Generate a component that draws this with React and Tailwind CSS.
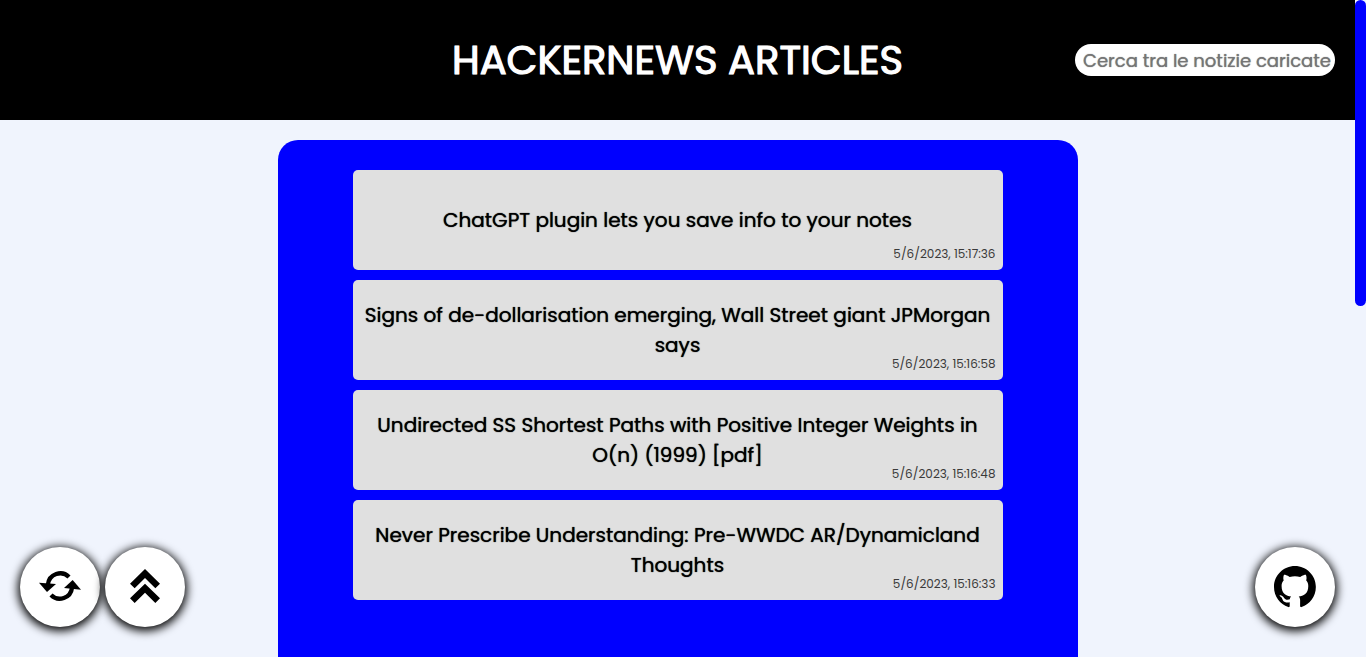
const articles = [
  { title: "ChatGPT plugin lets you save info to your notes", date: "5/6/2023, 15:17:36" },
  { title: "Signs of de-dollarisation emerging, Wall Street giant JPMorgan says", date: "5/6/2023, 15:16:58" },
  { title: "Undirected SS Shortest Paths with Positive Integer Weights in O(n) (1999) [pdf]", date: "5/6/2023, 15:16:48" },
  { title: "Never Prescribe Understanding: Pre-WWDC AR/Dynamicland Thoughts", date: "5/6/2023, 15:16:33" },
];

const round =
  "flex size-20 items-center justify-center rounded-full bg-white text-black shadow-[0_2px_10px_2px_#000]";

function Header() {
  return (
    <header className="grid min-h-[120px] grid-cols-[1fr_auto_1fr] items-center bg-black px-5">
      <h1 className="col-start-2 text-[40px] leading-[60px] font-normal text-white [-webkit-text-stroke:1px_white] [text-shadow:0_0_1px_#fff]">
        HACKERNEWS ARTICLES
      </h1>
      <input
        type="text"
        aria-label="Cerca tra le notizie caricate"
        placeholder="Cerca tra le notizie caricate"
        className="h-8 w-[260px] justify-self-end rounded-full bg-white pr-1 pl-2 text-[18px] font-normal text-black outline-none placeholder:text-[#757575] placeholder:[text-shadow:0_0_1px_#757575]"
      />
    </header>
  );
}

function Article({ title, date }) {
  return (
    <li>
      <a
        href="#"
        className="relative flex min-h-[100px] items-center justify-center rounded-[5px] bg-[#e0e0e0] px-2 py-5 text-center"
      >
        <h2 className="text-[20px] leading-[30px] font-normal text-black [text-shadow:0_0_1px_#000]">{title}</h2>
        <time className="absolute right-[7px] bottom-2 text-[12px] leading-4 font-normal text-[#3a3a3a]">{date}</time>
      </a>
    </li>
  );
}

export default function App() {
  return (
    <div className="flex h-screen bg-[#f0f4fd] font-['Poppins','Inter',sans-serif]">
      <div className="min-w-0 flex-1 overflow-y-auto [scrollbar-width:none]">
        <Header />
        <main className="mx-auto mt-5 min-h-[1270px] max-w-[800px] rounded-[20px] bg-[#0000ff] px-[75px] py-[30px]">
          <ul className="flex flex-col gap-[10px]">
            {articles.map((a) => (
              <Article key={a.date} {...a} />
            ))}
          </ul>
        </main>
      </div>

      <div className="w-[11px] shrink-0" aria-hidden="true">
        <div className="h-[46.6%] rounded-full bg-[#0000ff]" />
      </div>

      <div className="fixed bottom-[30px] left-5 flex gap-[5px]">
        <button type="button" aria-label="Aggiorna" className={round}>
          <svg viewBox="117 108 126 126" className="size-[42px]" fill="currentColor">
            <path d="M144 163 A37 37 0 0 1 207 141" fill="none" stroke="currentColor" strokeWidth="13" />
            <path d="M216 173 A37 37 0 0 1 153 195" fill="none" stroke="currentColor" strokeWidth="13" />
            <path d="M117 158 L168 162 L141 186 Z" />
            <path d="M243 179 L192 174 L218 150 Z" />
          </svg>
        </button>
        <button type="button" aria-label="Torna su" className={round}>
          <svg viewBox="372 108 126 126" className="size-[42px]" fill="currentColor">
            <path d="M435 117 L480 161 L466 175 L435 144 L404 175 L390 161 Z" />
            <path d="M435 161 L480 205 L466 219 L435 188 L404 219 L390 205 Z" />
          </svg>
        </button>
      </div>
      <a href="https://github.com" aria-label="GitHub" className={`${round} fixed right-[31px] bottom-[30px]`}>
        <svg viewBox="0 2 98 98" className="size-[42px]" fill="currentColor">
          <path
            fillRule="evenodd"
            clipRule="evenodd"
            d="M48.854 0C21.839 0 0 22 0 49.217c0 21.756 13.993 40.172 33.405 46.69 2.427.49 3.316-1.059 3.316-2.362 0-1.141-.08-5.052-.08-9.127-13.59 2.934-16.42-5.867-16.42-5.867-2.184-5.704-5.42-7.17-5.42-7.17-4.448-3.015.324-3.015.324-3.015 4.934.326 7.523 5.052 7.523 5.052 4.367 7.496 11.404 5.378 14.235 4.074.404-3.178 1.699-5.378 3.074-6.6-10.839-1.141-22.243-5.378-22.243-24.283 0-5.378 1.94-9.778 5.014-13.2-.485-1.222-2.184-6.275.486-13.038 0 0 4.125-1.304 13.426 5.052a46.97 46.97 0 0 1 12.214-1.63c4.125 0 8.33.571 12.213 1.63 9.302-6.356 13.427-5.052 13.427-5.052 2.67 6.763.97 11.816.485 13.038 3.155 3.422 5.015 7.822 5.015 13.2 0 18.905-11.404 23.06-22.324 24.283 1.78 1.548 3.316 4.481 3.316 9.126 0 6.6-.08 11.897-.08 13.526 0 1.304.89 2.853 3.316 2.364 19.412-6.52 33.405-24.935 33.405-46.691C97.707 22 75.788 0 48.854 0z"
            transform="translate(0 2)"
          />
        </svg>
      </a>
    </div>
  );
}
